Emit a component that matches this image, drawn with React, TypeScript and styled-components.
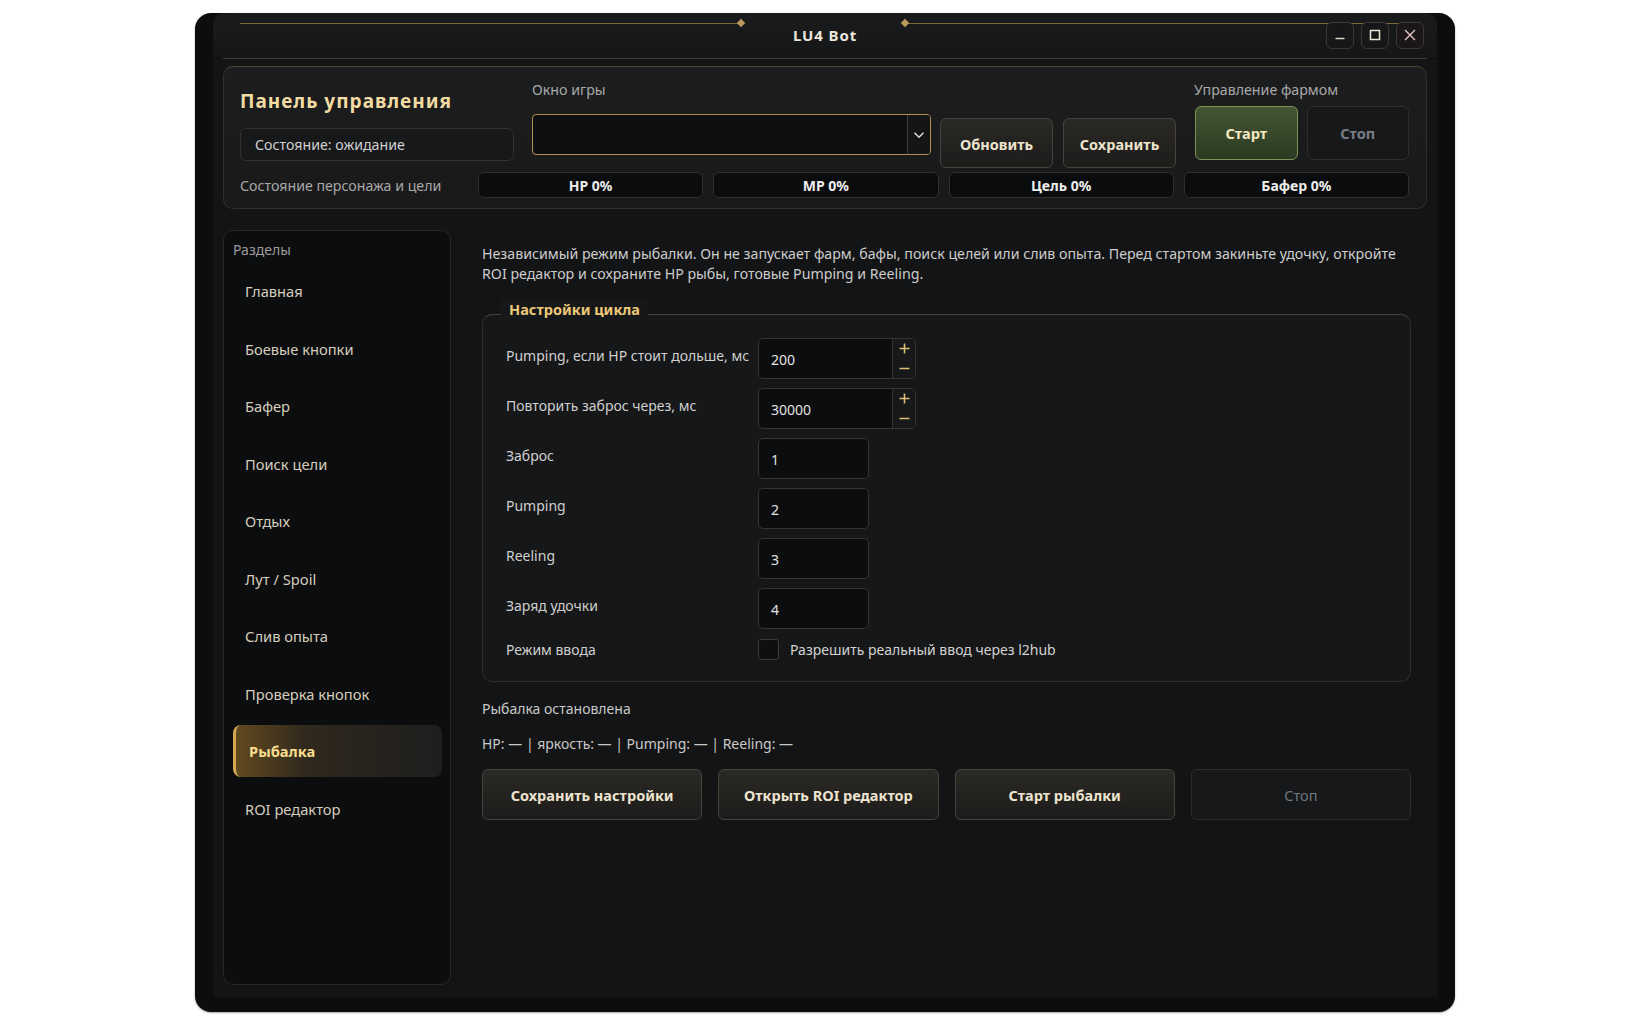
import styled, { createGlobalStyle } from "styled-components"

const GlobalStyle = createGlobalStyle`
    html, body {
        margin: 0;
        padding: 0;
        background: #ffffff;
    }
    body {
        font-family: "Noto Sans", "Open Sans", "DejaVu Sans", sans-serif;
    }
    * {
        box-sizing: border-box;
    }
`

const sections = [
    "Главная",
    "Боевые кнопки",
    "Бафер",
    "Поиск цели",
    "Отдых",
    "Лут / Spoil",
    "Слив опыта",
    "Проверка кнопок",
    "Рыбалка",
    "ROI редактор",
]

const bars = ["HP 0%", "MP 0%", "Цель 0%", "Бафер 0%"]

const fields = [
    { label: "Pumping, если HP стоит дольше, мс", value: "200", spin: true },
    { label: "Повторить заброс через, мс", value: "30000", spin: true },
    { label: "Заброс", value: "1", spin: false },
    { label: "Pumping", value: "2", spin: false },
    { label: "Reeling", value: "3", spin: false },
    { label: "Заряд удочки", value: "4", spin: false },
]

const MinIcon = () => (
    <svg width="12" height="12" viewBox="0 0 12 12">
        <path d="M1.5 9.5h9" stroke="#d9d6cf" strokeWidth="1.3" />
    </svg>
)

const MaxIcon = () => (
    <svg width="12" height="12" viewBox="0 0 12 12">
        <rect x="1.5" y="1.5" width="9" height="9" fill="none" stroke="#ece6d6" strokeWidth="1.5" />
    </svg>
)

const CloseIcon = () => (
    <svg width="14" height="14" viewBox="0 0 14 14">
        <path d="M2 2l10 10M12 2L2 12" stroke="#e6c6c2" strokeWidth="1.4" />
    </svg>
)

const Chevron = () => (
    <svg width="12" height="8" viewBox="0 0 12 8">
        <path d="M1.5 1.8L6 6.2l4.5-4.4" fill="none" stroke="#d6d6d6" strokeWidth="1.6" />
    </svg>
)

const Plus = () => (
    <svg width="11" height="11" viewBox="0 0 11 11">
        <path d="M5.5 0.5v10M0.5 5.5h10" stroke="#dcbd74" strokeWidth="1.6" />
    </svg>
)

const Minus = () => (
    <svg width="11" height="11" viewBox="0 0 11 11">
        <path d="M0.5 5.5h10" stroke="#dcbd74" strokeWidth="1.6" />
    </svg>
)

export default () => {
    return (
        <>
            <GlobalStyle />
            <Page>
                <Window>
                    <TitleBar>
                        <Ornament>
                            <GoldLine />
                            <Diamond />
                            <OrnamentGap />
                            <Diamond />
                            <GoldLine />
                        </Ornament>
                        <span />
                        <WindowTitle>LU4 Bot</WindowTitle>
                        <Controls>
                            <CtrlButton><MinIcon /></CtrlButton>
                            <CtrlButton><MaxIcon /></CtrlButton>
                            <CtrlButton $close><CloseIcon /></CtrlButton>
                        </Controls>
                    </TitleBar>
                    <Divider />
                    <Body>
                        <HeaderPanel>
                            <TopRow>
                                <BrandBlock>
                                    <PanelTitle>Панель управления</PanelTitle>
                                    <StateBox>Состояние: ожидание</StateBox>
                                </BrandBlock>
                                <GameBlock>
                                    <Caption>Окно игры</Caption>
                                    <Combo>
                                        <ComboText />
                                        <ComboArrow><Chevron /></ComboArrow>
                                    </Combo>
                                </GameBlock>
                                <ActionButtons>
                                    <ActionButton>Обновить</ActionButton>
                                    <ActionButton>Сохранить</ActionButton>
                                </ActionButtons>
                                <FarmBlock>
                                    <Caption>Управление фармом</Caption>
                                    <FarmButtons>
                                        <FarmButton $kind="start">Старт</FarmButton>
                                        <FarmButton $kind="stop">Стоп</FarmButton>
                                    </FarmButtons>
                                </FarmBlock>
                            </TopRow>
                            <BarsRow>
                                <BarsCaption>Состояние персонажа и цели</BarsCaption>
                                {bars.map((b) => (
                                    <Bar key={b}>{b}</Bar>
                                ))}
                            </BarsRow>
                        </HeaderPanel>

                        <MainRow>
                            <Sidebar>
                                <SidebarCaption>Разделы</SidebarCaption>
                                {sections.map((s) => (
                                    <NavItem key={s} $active={s === "Рыбалка"}>{s}</NavItem>
                                ))}
                            </Sidebar>

                            <Content>
                                <Description>
                                    Независимый режим рыбалки. Он не запускает фарм, бафы, поиск целей или слив опыта. Перед стартом закиньте удочку, откройте
                                    <br />
                                    ROI редактор и сохраните HP рыбы, готовые Pumping и Reeling.
                                </Description>

                                <Group>
                                    <GroupTitle>Настройки цикла</GroupTitle>
                                    {fields.map((f) => (
                                        <FieldRow key={f.label}>
                                            <FieldLabel>{f.label}</FieldLabel>
                                            <Input $width={f.spin ? 158 : 111}>
                                                <InputValue>{f.value}</InputValue>
                                                {f.spin && (
                                                    <SpinButtons>
                                                        <SpinHalf><Plus /></SpinHalf>
                                                        <SpinHalf><Minus /></SpinHalf>
                                                    </SpinButtons>
                                                )}
                                            </Input>
                                        </FieldRow>
                                    ))}
                                    <CheckRow>
                                        <CheckLabel>Режим ввода</CheckLabel>
                                        <CheckBox />
                                        <CheckText>Разрешить реальный ввод через l2hub</CheckText>
                                    </CheckRow>
                                </Group>

                                <StatusLine>Рыбалка остановлена</StatusLine>
                                <StatusLine>HP: — | яркость: — | Pumping: — | Reeling: —</StatusLine>

                                <BottomButtons>
                                    <BigButton>Сохранить настройки</BigButton>
                                    <BigButton>Открыть ROI редактор</BigButton>
                                    <BigButton>Старт рыбалки</BigButton>
                                    <BigButton $disabled>Стоп</BigButton>
                                </BottomButtons>
                            </Content>
                        </MainRow>
                    </Body>
                </Window>
            </Page>
        </>
    )
}

const Page = styled.div`
    width: 100vw;
    height: 100vh;
    display: flex;
    align-items: center;
    justify-content: center;
`

const Window = styled.div`
    width: 1260px;
    height: 999px;
    display: flex;
    flex-direction: column;
    padding: 0 18px 15px;
    background: #0c0d0e;
    border-radius: 16px;
    box-shadow: 0 1px 2px rgba(0, 0, 0, 0.35);
    overflow: hidden;
`

const TitleBar = styled.div`
    position: relative;
    height: 45px;
    flex-shrink: 0;
    display: grid;
    grid-template-columns: 1fr auto 1fr;
    align-items: center;
    padding: 0 12px 1px;
    background: linear-gradient(180deg, #1a1b1c 0%, #151617 100%);
    border-radius: 12px 12px 0 0;
`

// gold rule with two diamonds across the title bar
const Ornament = styled.div`
    position: absolute;
    top: 7px;
    left: 27px;
    right: 31px;
    display: flex;
    align-items: center;
    pointer-events: none;
`

const GoldLine = styled.div`
    flex: 1;
    height: 1px;
    background: #7d6839;
`

const Diamond = styled.div`
    width: 6px;
    height: 6px;
    background: #b99a5c;
    transform: rotate(45deg);
`

const OrnamentGap = styled.div`
    width: 158px;
`

const WindowTitle = styled.div`
    color: #ebe6dc;
    font-size: 15px;
    font-weight: 700;
    letter-spacing: 0.9px;
`

const Controls = styled.div`
    display: flex;
    justify-content: flex-end;
    gap: 7px;
    position: relative;
    margin-right: 1px;
`

const CtrlButton = styled.div<{ $close?: boolean }>`
    width: 28px;
    height: 27px;
    display: flex;
    align-items: center;
    justify-content: center;
    border: 1px solid #38393b;
    border-radius: 6px;
    background: ${(p) => (p.$close ? "#1b1718" : "#161718")};
`

const Divider = styled.div`
    height: 1px;
    margin: 0 10px;
    background: #3a3b3c;
    flex-shrink: 0;
`

const Body = styled.div`
    flex: 1;
    min-height: 0;
    display: flex;
    flex-direction: column;
    gap: 21px;
    padding: 7px 10px 12px;
    background: #131415;
`

const HeaderPanel = styled.div`
    height: 143px;
    flex-shrink: 0;
    display: flex;
    flex-direction: column;
    gap: 4px;
    padding: 13px 17px 10px 16px;
    border: 1px solid #2f2f30;
    border-top-color: #4f4532;
    border-radius: 10px;
    background: linear-gradient(180deg, #1c1d1e 0%, #19191a 100%);
`

const TopRow = styled.div`
    height: 88px;
    display: flex;
    align-items: flex-start;
`

const BrandBlock = styled.div`
    width: 274px;
    padding-top: 9px;
    display: flex;
    flex-direction: column;
    gap: 15px;
`

const PanelTitle = styled.div`
    color: #f2dba3;
    font-size: 19px;
    font-weight: 700;
    letter-spacing: 1px;
    line-height: 24px;
`

const StateBox = styled.div`
    height: 33px;
    display: flex;
    align-items: center;
    padding-left: 14px;
    color: #cfcfcf;
    font-size: 14.2px;
    background: #17181a;
    border: 1px solid #303133;
    border-radius: 6px;
`

const GameBlock = styled.div`
    width: 399px;
    margin-left: 18px;
    display: flex;
    flex-direction: column;
    gap: 14px;
`

const Caption = styled.div`
    color: #a8a8a8;
    font-size: 14.2px;
    line-height: 20px;
`

const Combo = styled.div`
    height: 41px;
    display: flex;
    border: 1px solid #b48f53;
    border-radius: 4px;
    background: #0e0f10;
    overflow: hidden;
`

const ComboText = styled.div`
    flex: 1;
`

const ComboArrow = styled.div`
    width: 23px;
    display: flex;
    align-items: center;
    justify-content: center;
    border-left: 1px solid #3a3b3c;
    background: #141517;
`

const ActionButtons = styled.div`
    margin-left: 9px;
    margin-top: 38px;
    display: flex;
    gap: 10px;
`

const ActionButton = styled.div`
    width: 113px;
    height: 50px;
    display: flex;
    align-items: center;
    justify-content: center;
    padding-top: 2px;
    color: #ede4cf;
    font-size: 14.5px;
    font-weight: 700;
    background: linear-gradient(180deg, #2b2925 0%, #1c1c1b 100%);
    border: 1px solid #46433d;
    border-radius: 6px;
`

const FarmBlock = styled.div`
    margin-left: auto;
    width: 215px;
    display: flex;
    flex-direction: column;
    gap: 6px;
`

const FarmButtons = styled.div`
    display: flex;
    gap: 9px;
    padding-left: 1px;
`

const FarmButton = styled.div<{ $kind: "start" | "stop" }>`
    flex: 1;
    height: 54px;
    display: flex;
    align-items: center;
    justify-content: center;
    font-size: 14.5px;
    font-weight: 700;
    border-radius: 6px;
    ${(p) =>
        p.$kind === "start"
            ? `
        color: #f5e7c2;
        background: linear-gradient(180deg, #445634 0%, #2b3a22 100%);
        border: 1px solid #7c9356;
    `
            : `
        color: #767d86;
        background: #17181a;
        border: 1px solid #2d2e30;
    `}
`

const BarsRow = styled.div`
    height: 26px;
    display: flex;
    align-items: center;
    gap: 10px;
`

const BarsCaption = styled.div`
    width: 228px;
    color: #a8a8a8;
    font-size: 14.2px;
    white-space: nowrap;
`

const Bar = styled.div`
    flex: 1;
    height: 26px;
    display: flex;
    align-items: center;
    justify-content: center;
    color: #eeeeee;
    font-size: 14px;
    font-weight: 700;
    background: #0b0c0d;
    border: 1px solid #2e2f31;
    border-radius: 6px;
`

const MainRow = styled.div`
    flex: 1;
    min-height: 0;
    display: flex;
`

const Sidebar = styled.div`
    width: 228px;
    flex-shrink: 0;
    display: flex;
    flex-direction: column;
    gap: 5.5px;
    padding: 9px 8px 0 9px;
    background: #0c0d0f;
    border: 1px solid #27282a;
    border-radius: 10px;
`

const SidebarCaption = styled.div`
    color: #9c9c9c;
    font-size: 14px;
    line-height: 20px;
    margin-bottom: -0.5px;
`

const NavItem = styled.div<{ $active?: boolean }>`
    height: 52px;
    display: flex;
    align-items: center;
    font-size: 14.7px;
    border-radius: 8px;
    ${(p) =>
        p.$active
            ? `
        padding-left: 13px;
        color: #f9dd8e;
        font-weight: 700;
        border-left: 3px solid #d5a650;
        background: linear-gradient(90deg, #62491f 0%, #2f281d 35%, #1e1e1e 100%);
    `
            : `
        padding-left: 12px;
        color: #d5cdbd;
    `}
`

const Content = styled.div`
    flex: 1;
    min-width: 0;
    padding: 14px 16px 0 31px;
    display: flex;
    flex-direction: column;
`

const Description = styled.div`
    color: #cdcdcd;
    font-size: 14.2px;
    line-height: 20px;
    white-space: nowrap;
`

const Group = styled.div`
    position: relative;
    margin-top: 30px;
    display: flex;
    flex-direction: column;
    gap: 9px;
    padding: 23px 23px 21px 23px;
    background: #161718;
    border: 1px solid #2d2e30;
    border-top-color: #4a4234;
    border-radius: 10px;
`

// title sits on the top border, like a legend
const GroupTitle = styled.div`
    position: absolute;
    top: -17px;
    left: 18px;
    height: 21px;
    padding: 0 8px;
    display: flex;
    align-items: center;
    color: #ecc879;
    font-size: 14.5px;
    font-weight: 700;
    background: #161718;
`

const FieldRow = styled.div`
    display: flex;
    align-items: flex-start;
`

const FieldLabel = styled.div`
    width: 252px;
    padding-top: 8px;
    color: #cfcfcf;
    font-size: 14px;
    line-height: 20px;
    white-space: nowrap;
`

const Input = styled.div<{ $width: number }>`
    width: ${(p) => p.$width}px;
    height: 41px;
    display: flex;
    background: #0c0d0e;
    border: 1px solid #333436;
    border-radius: 5px;
    overflow: hidden;
`

const InputValue = styled.div`
    flex: 1;
    display: flex;
    align-items: center;
    padding: 2px 0 0 12px;
    color: #e2e2e2;
    font-size: 14px;
`

const SpinButtons = styled.div`
    width: 23px;
    display: flex;
    flex-direction: column;
    border-left: 1px solid #333436;
    background: #17181a;
`

const SpinHalf = styled.div`
    flex: 1;
    display: flex;
    align-items: center;
    justify-content: center;
`

const CheckRow = styled.div`
    margin-top: 1px;
    height: 21px;
    display: flex;
    align-items: center;
`

const CheckLabel = styled(FieldLabel)`
    padding-top: 0;
`

const CheckBox = styled.div`
    width: 21px;
    height: 21px;
    background: #0e0f10;
    border: 1px solid #3a3b3d;
    border-radius: 3px;
`

const CheckText = styled.div`
    margin-left: 11px;
    color: #d2d2d2;
    font-size: 14px;
`

const StatusLine = styled.div`
    margin-top: 17px;
    color: #c9c9c9;
    font-size: 14px;
    line-height: 20px;

    & + & {
        margin-top: 15px;
    }
`

const BottomButtons = styled.div`
    margin-top: 15px;
    display: flex;
    gap: 16px;
`

const BigButton = styled.div<{ $disabled?: boolean }>`
    flex: 1;
    height: 51px;
    display: flex;
    align-items: center;
    justify-content: center;
    font-size: 14.5px;
    border-radius: 6px;
    ${(p) =>
        p.$disabled
            ? `
        color: #6f7680;
        background: #17181a;
        border: 1px solid #2b2c2e;
    `
            : `
        color: #ede4cf;
        font-weight: 700;
        background: linear-gradient(180deg, #2b2925 0%, #1c1c1b 100%);
        border: 1px solid #46433d;
    `}
`
